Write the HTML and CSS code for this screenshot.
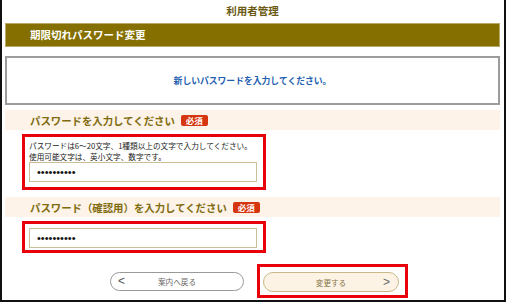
FILE: index.html
```html
<!DOCTYPE html>
<html lang="ja">
<head>
<meta charset="utf-8">
<title>利用者管理</title>
<link rel="stylesheet" href="styles.css">
</head>
<body>
<div class="frame">
  <div class="title">利用者管理</div>
  <div class="bar">期限切れパスワード変更</div>
  <div class="msg">新しいパスワードを入力してください。</div>

  <div class="sec-head"><span class="sec-label">パスワードを入力してください</span><span class="badge">必須</span></div>
  <div class="field">
    <p class="note">パスワードは6～20文字、1種類以上の文字で入力してください。<br>使用可能文字は、英小文字、数字です。</p>
    <input class="pw" type="password" value="abcdefghij">
  </div>

  <div class="sec-head sec-head-2"><span class="sec-label">パスワード（確認用）を入力してください</span><span class="badge">必須</span></div>
  <div class="field field-2">
    <input class="pw" type="password" value="abcdefghij">
  </div>

  <div class="actions">
    <button class="btn btn-back" type="button"><span class="arrow">&lt;</span><span class="btn-text">案内へ戻る</span></button>
    <div class="hl">
      <button class="btn btn-next" type="button"><span class="btn-text">変更する</span><span class="arrow">&gt;</span></button>
    </div>
  </div>
</div>
</body>
</html>
```

FILE: styles.css
```css
* { box-sizing: border-box; }
html, body { margin: 0; padding: 0; background: #fff; }
body { font-family: "Noto Sans CJK JP", "Noto Sans", sans-serif; }

.frame {
  width: 506px;
  height: 302px;
  border-left: 2px solid #111;
  border-right: 2px solid #111;
  border-bottom: 2px solid #111;
  padding: 0 4px 0 3px;
  overflow: hidden;
}

.title {
  height: 23px;
  line-height: 21px;
  text-align: center;
  font-size: 10.5px;
  font-weight: bold;
  color: #6b5a14;
}

.bar {
  height: 24px;
  background: #846f00;
  border: 1px solid #b8aa66;
  color: #fff;
  font-size: 10.5px;
  font-weight: bold;
  line-height: 22px;
  padding-left: 24px;
  margin-bottom: 9px;
}

.msg {
  height: 49px;
  border: 2px solid #9c9c9c;
  display: flex;
  align-items: center;
  justify-content: center;
  color: #1f5fb0;
  font-size: 8.8px;
  font-weight: bold;
  margin-bottom: 5px;
}

.sec-head {
  height: 20px;
  background: #fdf3e8;
  display: flex;
  align-items: center;
  padding-left: 25px;
  margin-bottom: 4px;
}
.sec-head-2 { margin-top: 7px; }

.sec-label {
  font-size: 10.4px;
  font-weight: bold;
  color: #7f6b0e;
}

.badge {
  margin-left: 6px;
  height: 11px;
  padding: 0 5px;
  background: #d6360f;
  color: #fff;
  font-size: 8.5px;
  font-weight: bold;
  line-height: 11px;
  border-radius: 2px;
}

.field {
  width: 244px;
  margin-left: 17px;
  border: 3px solid #e8000b;
  padding: 3px 6px 5px 4px;
}
.field-2 { padding: 4px 6px 2px 4px; }

.note {
  margin: 0;
  font-size: 7.65px;
  line-height: 11px;
  color: #222;
}

.pw {
  display: block;
  width: 228px;
  height: 20px;
  margin: 0;
  border: 1px solid #c9c09a;
  background: #fff;
  padding: 0 7px;
  font-family: "Liberation Sans", sans-serif;
  font-size: 11px;
  color: #111;
  outline: none;
}

.actions {
  display: flex;
  align-items: center;
  gap: 13px;
  margin-top: 11px;
  padding-left: 105px;
}

.hl {
  border: 3px solid #e8000b;
  padding: 5px 6px 3px 3px;
}

.btn {
  position: relative;
  display: flex;
  align-items: center;
  justify-content: center;
  height: 20px;
  border-radius: 10px;
  font-family: "Noto Sans CJK JP", sans-serif;
  font-size: 7.6px;
  padding: 0;
  margin: 0;
  cursor: pointer;
}

.btn-back {
  width: 134px;
  height: 19px;
  background: #fff;
  border: 1px solid #9a9a9a;
  color: #666;
}

.btn-next {
  width: 136px;
  background: #fdf3e5;
  border: 1px solid #c9b987;
  color: #857548;
}

.arrow {
  position: absolute;
  top: 50%;
  transform: translateY(-50%);
  font-family: "Liberation Sans", sans-serif;
  font-size: 12px;
  line-height: 1;
}
.btn-back .arrow { left: 7px; color: #555; }
.btn-next .arrow { right: 8px; color: #666; }

.btn-text { display: block; }
```
